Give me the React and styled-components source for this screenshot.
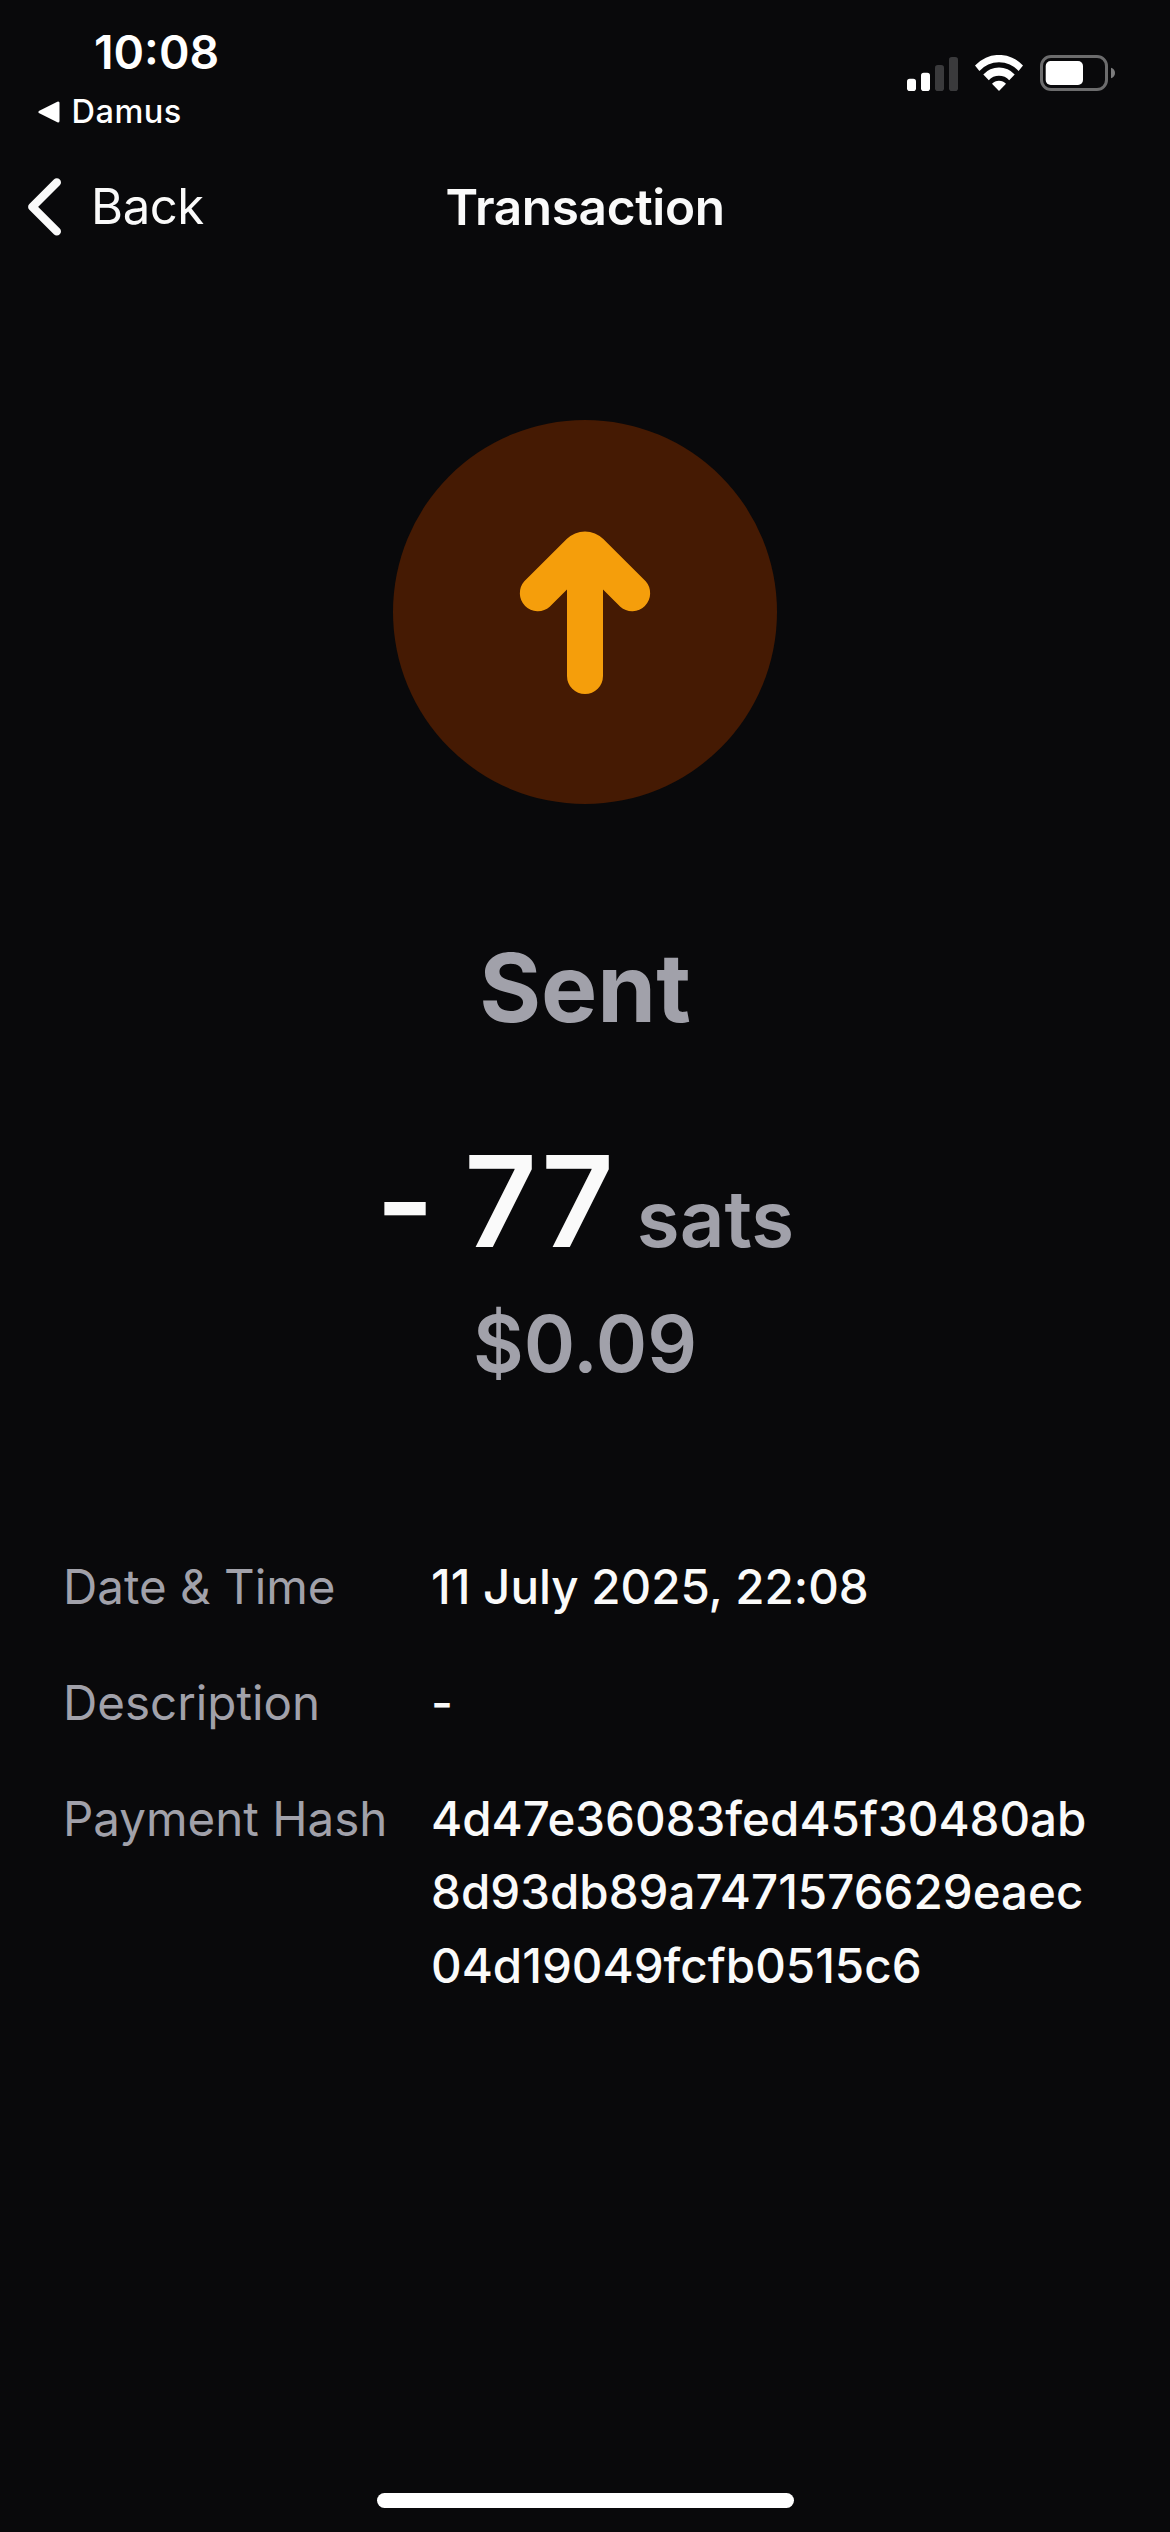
import React from 'react'
import styled, { createGlobalStyle } from 'styled-components'

const details = [
    { label: 'Date & Time', lines: ['11 July 2025, 22:08'] },
    { label: 'Description', lines: ['-'] },
    {
        label: 'Payment Hash',
        lines: ['4d47e36083fed45f30480ab', '8d93db89a7471576629eaec', '04d19049fcfb0515c6'],
    },
]

function SignalIcon() {
    return (
        <svg width="51" height="36" viewBox="0 0 51 36">
            <rect x="0" y="23.7" width="9" height="12.3" rx="2.8" fill="#fff" />
            <rect x="14" y="17.7" width="9" height="18.3" rx="2.8" fill="#fff" />
            <rect x="28" y="10" width="9" height="26" rx="2.8" fill="#3a3a3c" />
            <rect x="42" y="2" width="9" height="34" rx="2.8" fill="#3a3a3c" />
        </svg>
    )
}

function WifiIcon() {
    return (
        <svg width="48" height="36" viewBox="0 0 48 36" fill="#fff">
            <path d="M0 10.5A32.5 32.5 0 0 1 48 10.5L43.6 16A26.2 26.2 0 0 0 4.4 16Z" />
            <path d="M8.3 19.5A21 21 0 0 1 39.7 19.5L34.2 25.3A13.5 13.5 0 0 0 13.8 25.3Z" />
            <path d="M17 28.8A9.5 9.5 0 0 1 31 28.8L24 36Z" />
        </svg>
    )
}

function BatteryIcon() {
    return (
        <svg width="75" height="36" viewBox="0 0 75 36">
            <rect x="1.5" y="1.5" width="65" height="33" rx="9.5" fill="none" stroke="#6c6c6d" strokeWidth="3" />
            <rect x="5.7" y="6" width="37.3" height="24" rx="5" fill="#fff" />
            <path d="M71 12.7C73.6 13.6 75 15.6 75 18C75 20.4 73.6 22.4 71 23.3Z" fill="#7c7c7d" />
        </svg>
    )
}

function BackToAppIcon() {
    return (
        <svg width="22" height="22" viewBox="0 0 22 22">
            <path d="M2 11L20 2V20Z" fill="#fff" stroke="#fff" strokeWidth="3" strokeLinejoin="round" />
        </svg>
    )
}

function ChevronIcon() {
    return (
        <svg width="33" height="58" viewBox="0 0 33 58" fill="none">
            <path
                d="M28.8 4.4L4.3 28.9L28.8 53.4"
                stroke="#fafafa"
                strokeWidth="8.4"
                strokeLinecap="round"
                strokeLinejoin="round"
            />
        </svg>
    )
}

function ArrowUpIcon() {
    return (
        <svg width="192" height="192" viewBox="0 0 192 192">
            <path
                d="M35.3 65.3L77.7 23A25.9 25.9 0 0 1 114.3 23L156.7 65.3A18 18 0 0 1 131.3 90.7L114 73.4V160A18 18 0 0 1 78 160V73.4L60.7 90.7A18 18 0 0 1 35.3 65.3Z"
                fill="#f59e0b"
            />
        </svg>
    )
}

function App() {
    return (
        <Screen>
            <GlobalStyle />
            <StatusBar>
                <div>
                    <Time>10:08</Time>
                    <BackToApp>
                        <BackToAppIcon />
                        <span>Damus</span>
                    </BackToApp>
                </div>
                <StatusIcons>
                    <SignalIcon />
                    <WifiIcon />
                    <BatteryIcon />
                </StatusIcons>
            </StatusBar>

            <Header>
                <BackButton type="button">
                    <ChevronIcon />
                    Back
                </BackButton>
                <Title>Transaction</Title>
            </Header>

            <Badge>
                <ArrowUpIcon />
            </Badge>
            <Status>Sent</Status>
            <Amount>
                <Value>- 77</Value>
                <Unit>sats</Unit>
            </Amount>
            <Fiat>$0.09</Fiat>

            <Details>
                {details.map(({ label, lines }) => (
                    <Row key={label}>
                        <Label>{label}</Label>
                        <Text>
                            {lines.map((line) => (
                                <div key={line}>{line}</div>
                            ))}
                        </Text>
                    </Row>
                ))}
            </Details>

            <HomeIndicator />
        </Screen>
    )
}

const GlobalStyle = createGlobalStyle`
    * {
        box-sizing: border-box;
    }

    body {
        margin: 0;
        background: #09090b;
    }

    svg {
        display: block;
        flex-shrink: 0;
    }
`;

const Screen = styled.div`
    display: flex;
    flex-direction: column;
    align-items: center;
    width: 1170px;
    height: 2532px;
    background: #09090b;
    color: #fafafa;
    font-family: Inter, sans-serif;
    font-feature-settings: 'calt' 0; /* keeps the minus and the colon low next to digits */
    white-space: nowrap;
`;

const StatusBar = styled.div`
    display: flex;
    justify-content: space-between;
    width: 100%;
    height: 141px;
    padding: 22px 55px 0 38px;
    color: #fff;
`;

const Time = styled.div`
    padding-left: 56px;
    font-size: 46.3px;
    font-weight: 600;
    font-feature-settings: 'calt' 1;
    line-height: 60px;
`;

const BackToApp = styled.div`
    display: flex;
    align-items: center;
    gap: 11.5px;
    font-size: 32.5px;
    font-weight: 500;
    line-height: 59px;
    letter-spacing: 0.5px;
`;

const StatusIcons = styled.div`
    display: flex;
    gap: 17px;
    padding-top: 33px;
`;

const Header = styled.header`
    display: grid;
    grid-template-columns: 1fr auto 1fr;
    align-items: center;
    width: 100%;
    height: 132px;
    padding: 0 28px;
`;

const BackButton = styled.button`
    display: flex;
    align-items: center;
    gap: 30px;
    padding: 0;
    border: none;
    background: none;
    color: inherit;
    font-family: inherit;
    font-size: 49px;
    line-height: 58px;
    letter-spacing: -0.4px;
`;

const Title = styled.h1`
    margin: 0;
    font-size: 49.5px;
    font-weight: 600;
    line-height: 60px;
    letter-spacing: -0.35px;
`;

const Badge = styled.div`
    display: flex;
    align-items: center;
    justify-content: center;
    width: 384px;
    height: 384px;
    margin-top: 147px;
    border-radius: 50%;
    background: #451a03;
`;

const Status = styled.h2`
    margin: 120px 0 0;
    color: #a1a1aa;
    font-size: 94.5px;
    font-weight: 700;
    line-height: 128px;
`;

const Amount = styled.div`
    display: flex;
    align-items: baseline;
    gap: 21px;
    margin-top: 86px;
    font-weight: 600;
    line-height: 126px;
`;

const Value = styled.span`
    font-size: 126px;
    letter-spacing: 2px;
    word-spacing: -6px;
`;

const Unit = styled.span`
    color: #a1a1aa;
    font-size: 78px;
    line-height: 78px;
`;

const Fiat = styled.div`
    margin-top: 20px;
    color: #a1a1aa;
    font-size: 78px;
    font-weight: 600;
    line-height: 120px;
`;

const Details = styled.div`
    display: flex;
    flex-direction: column;
    gap: 43px;
    width: 100%;
    margin-top: 145.5px;
    padding-left: 63px;
    font-size: 47.5px;
    line-height: 73.3px;
`;

const Row = styled.div`
    display: flex;
`;

const Label = styled.div`
    width: 368px;
    color: #a1a1aa;
`;

const Text = styled.div`
    font-weight: 500;
`;

const HomeIndicator = styled.div`
    width: 417px;
    height: 15px;
    margin: auto 0 24px 1px;
    border-radius: 8px;
    background: #fff;
`;

export default App
